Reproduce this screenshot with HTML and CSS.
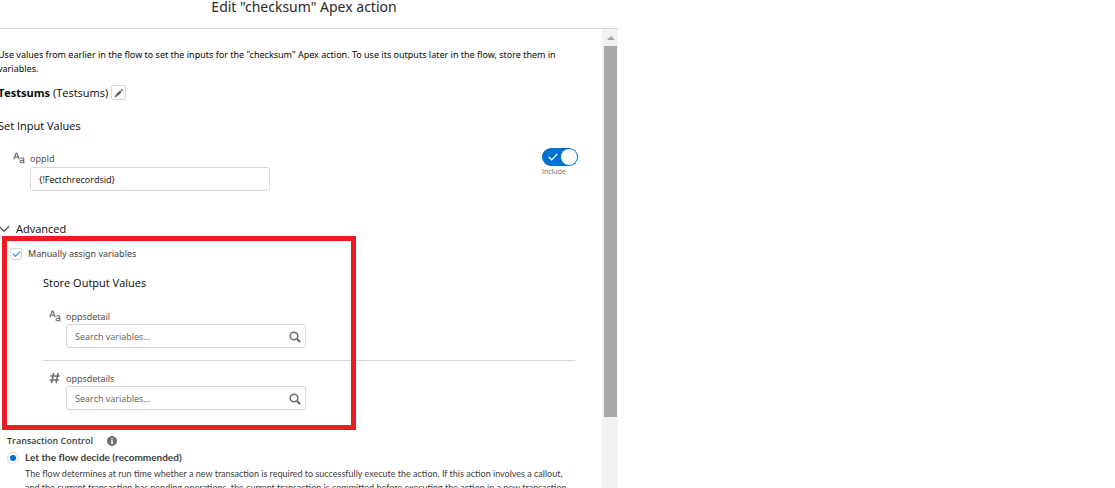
FILE: index.html
```html
<!DOCTYPE html>
<html lang="en">
<head>
<meta charset="utf-8">
<meta name="viewport" content="width=device-width, initial-scale=1">
<title>Edit "checksum" Apex action</title>
<link rel="stylesheet" href="styles.css">
</head>
<body>
<main class="dialog">
  <header class="dialog-header"><h1 class="dialog-title">Edit "checksum" Apex action</h1></header>
  <div class="dialog-body">
    <div class="content">
      <p class="intro">Use values from earlier in the flow to set the inputs for the "checksum" Apex action. To use its outputs later in the flow, store them in variables.</p>
      <div class="name-row">
        <span><b>Testsums</b> (Testsums)</span>
        <button class="edit-button" type="button" aria-label="Edit name">
          <svg viewBox="0 0 10 10" width="10" height="10"><path d="M1.600 6.900 6.100 2.400 7.600 3.900 3.100 8.400ZM6.700 1.900 7.300 1.300Q7.700 .9 8.100 1.300L8.700 1.900Q9.100 2.300 8.700 2.700L8.100 3.300ZM1.200 7.300 2.700 8.800.6 9.400Z" fill="#57544f"/></svg>
        </button>
      </div>
      <h2 class="heading">Set Input Values</h2>
      <div class="input-row">
        <div class="field field-input">
          <svg class="type-icon" viewBox="0 0 12 12" width="12" height="12" fill="none" stroke="#706e6b" stroke-width="1.2"><path d="M.7 7.300 3.200 1h.6l2.500 6.300M1.800 5.200h3.400M7.400 6.300Q10.800 4.800 10.800 7.300V11.400M10.800 8.400Q7 8 7 9.800T10.800 10"/></svg>
          <label class="field-label" for="opp-id">oppId</label>
          <input class="text-input" id="opp-id" type="text" value="{!Fectchrecordsid}">
        </div>
        <label class="toggle">
          <input class="toggle-input" type="checkbox" role="switch" checked>
          <span class="toggle-track">
            <svg viewBox="0 0 10 8" width="10" height="8"><path d="M.7 4 3.700 6.800 9.300 1" fill="none" stroke="#fff" stroke-width="1.200"/></svg>
            <span class="toggle-thumb"></span>
          </span>
          <span class="toggle-text">Include</span>
        </label>
      </div>
      <button class="advanced" type="button" aria-expanded="true">
        <svg viewBox="0 0 12 8" width="12" height="8"><path d="M1 1.300 6 6.300 11 1.300" fill="none" stroke="#605e5b" stroke-width="1.500"/></svg>
        Advanced
      </button>
      <section class="manual">
        <div class="highlight"></div>
        <label class="check-row"><input class="checkbox" type="checkbox" checked>Manually assign variables</label>
        <div class="outputs">
          <h2 class="heading">Store Output Values</h2>
          <div class="field field-output">
            <svg class="type-icon" viewBox="0 0 12 12" width="12" height="12" fill="none" stroke="#706e6b" stroke-width="1.2"><path d="M.7 7.300 3.200 1h.6l2.500 6.300M1.800 5.200h3.400M7.400 6.300Q10.800 4.800 10.800 7.300V11.400M10.800 8.400Q7 8 7 9.800T10.800 10"/></svg>
            <label class="field-label" for="detail">oppsdetail</label>
            <div class="search">
              <input class="text-input" id="detail" type="text" placeholder="Search variables...">
              <svg class="search-icon" viewBox="0 0 12 12" width="12" height="12"><path d="M8 8 11 11" stroke="#605e5b" stroke-width="1.800"/><circle cx="5" cy="5" r="3.800" fill="none" stroke="#706e6b" stroke-width="1.600"/></svg>
            </div>
          </div>
          <hr class="divider">
          <div class="field field-output">
            <svg class="type-icon" viewBox="0 0 12 12" width="12" height="12"><path d="M4.600 1 2.600 11M9.100 1 7.100 11M1.400 4H10.600M.6 8h9.200" fill="none" stroke="#706e6b" stroke-width="1.500"/></svg>
            <label class="field-label" for="details">oppsdetails</label>
            <div class="search">
              <input class="text-input" id="details" type="text" placeholder="Search variables...">
              <svg class="search-icon" viewBox="0 0 12 12" width="12" height="12"><path d="M8 8 11 11" stroke="#605e5b" stroke-width="1.800"/><circle cx="5" cy="5" r="3.800" fill="none" stroke="#706e6b" stroke-width="1.600"/></svg>
            </div>
          </div>
        </div>
      </section>
      <section class="transaction">
        <h3 class="transaction-title">Transaction Control
          <svg viewBox="0 0 10 10" width="10" height="10"><circle cx="5" cy="5" r="5" fill="#706e6b"/><path d="M4.300 2h1.400v1.300H4.300ZM4 4.300h1.800v2.700h.5v.8H3.800V7h.5V5H4Z" fill="#fff"/></svg>
        </h3>
        <label class="radio-row"><input class="radio" type="radio" name="transaction" checked>Let the flow decide (recommended)</label>
        <p class="description">The flow determines at run time whether a new transaction is required to successfully execute the action. If this action involves a callout, and the current transaction has pending operations, the current transaction is committed before executing the action in a new transaction.</p>
      </section>
    </div>
    <div class="scrollbar" aria-hidden="true">
      <svg class="scroll-arrow" viewBox="0 0 8 4" width="8" height="4"><path d="M0 4 4 0 8 4Z" fill="#a3a3a3"/></svg>
      <div class="scroll-thumb"></div>
    </div>
  </div>
</main>
</body>
</html>
```
FILE: styles.css
```css
* { box-sizing: border-box; }
body {
  margin: 0;
  background: #fff;
  color: #080707;
  font: 9px/14px "Open Sans", "Noto Sans", sans-serif;
  overflow: hidden;
}
h1, h2, h3, p { margin: 0; font-weight: 400; }
svg { display: block; flex: none; }
button, input { font: inherit; color: inherit; }
button { padding: 0; background: none; border: 0; }

.dialog { display: flex; flex-direction: column; max-width: 618px; height: 100vh; }
.dialog-header { padding: 0 10px 14px 0; border-bottom: 1px solid #d8d8d8; text-align: center; }
.dialog-title { color: #2b2826; font-family: "Noto Sans", sans-serif; font-size: 14px; line-height: 14px; }
.dialog-body { display: flex; flex: 1; min-height: 0; }
.content { flex: 1; min-width: 0; padding: 19px 24px 0 0; margin-left: -2px; }

.intro { padding-right: 8px; font-family: "Noto Sans", sans-serif; }
.name-row { display: flex; align-items: center; gap: 3px; margin-top: 9px; font-size: 11px; line-height: 14px; }
.edit-button { display: grid; place-items: center; width: 15px; height: 15px; border: 1px solid #d8d8d8; border-radius: 2px; }
.heading { font-size: 11px; line-height: 18px; }
.name-row + .heading { margin-top: 17px; }

.input-row { display: flex; justify-content: space-between; margin-top: 13px; }
.field { display: grid; grid-template-columns: 12px 240px; column-gap: 5px; }
.field-input { padding: 4px 0 0 15px; row-gap: 1px; }
.field-label { color: #3e3e3c; line-height: 14px; }
.text-input {
  width: 100%;
  height: 24px;
  padding: 0 24px 0 8px;
  border: 1px solid #d8d8d8;
  border-radius: 3px;
  background: #fff;
}
.text-input::placeholder { color: #605e5b; opacity: 1; }
.field-input .text-input { grid-column: 2; }

.toggle { display: flex; flex-direction: column; width: 36px; position: relative; }
.toggle-input { position: absolute; inset: 0; margin: 0; opacity: 0; }
.toggle-track { display: flex; align-items: center; justify-content: space-between; height: 18px; padding: 0 1px 0 6px; border-radius: 9px; background: #0070d2; }
.toggle-thumb { width: 16px; height: 16px; border-radius: 50%; background: #fff; }
.toggle-text { color: #706e6b; font-size: 7px; line-height: 11px; }

.advanced { display: flex; align-items: center; gap: 6px; margin-top: 29px; font-size: 11px; line-height: 18px; }

.manual { position: relative; padding: 9px 3px 24px 12px; }
.highlight { position: absolute; top: -2px; left: 4px; width: 354px; bottom: 4px; border: 5px solid #ed1c24; pointer-events: none; }
.check-row { display: flex; align-items: center; gap: 6px; color: #3e3e3c; font-family: "Noto Sans", sans-serif; }
.checkbox, .radio { appearance: none; width: 12px; height: 12px; margin: 0; border: 1px solid #d8d8d8; background: #fff; }
.checkbox { display: grid; place-items: center; border-radius: 2px; }
.checkbox:checked::before { content: ""; width: 6px; height: 3px; margin-bottom: 2px; border: solid #1589ee; border-width: 0 0 1px 1px; transform: rotate(-45deg); }
.outputs { margin: 13px 0 0 33px; }
.field-output { padding-left: 6px; }
.heading + .field-output { margin-top: 18px; }
.search { grid-column: 2; position: relative; }
.search-icon { position: absolute; top: 7px; right: 5px; }
.divider { height: 1px; margin: 12px 0 11px; border: 0; background: #d8d8d8; }

.transaction { padding-left: 9px; color: #3e3e3c; }
.transaction-title { display: flex; align-items: center; gap: 14px; font-size: 9px; font-weight: 600; }
.radio-row { display: flex; align-items: center; gap: 6px; margin-top: 2px; font-family: Lato, sans-serif; font-size: 10px; font-weight: 700; line-height: 15px; }
.radio { display: grid; place-items: center; border-radius: 50%; }
.radio:checked::before { content: ""; width: 6px; height: 6px; border-radius: 50%; background: #0070d2; }
.description { padding-left: 18px; margin-top: 2px; font-family: Lato, sans-serif; }

.scrollbar { display: flex; flex-direction: column; align-items: center; width: 16px; padding: 7px 1px 0 2px; background: #f1f1f1; }
.scroll-thumb { width: 100%; height: 82%; margin-top: 6px; background: #a8a8a8; }
```
